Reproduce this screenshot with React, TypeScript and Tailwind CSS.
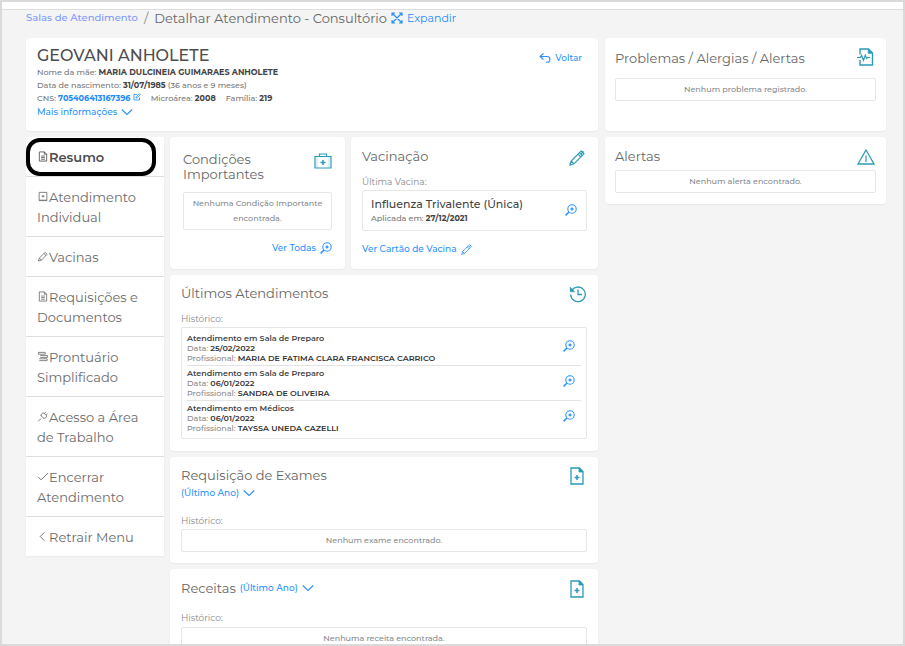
import React from 'react';

interface IconProps {
  className?: string;
}

interface SvgProps extends IconProps {
  children: React.ReactNode;
  viewBox?: string;
  stroke?: number;
}

function Svg({ children, className = '', viewBox = '0 0 18 18', stroke = 1.4 }: SvgProps) {
  return (
    <svg
      viewBox={viewBox}
      fill="none"
      stroke="currentColor"
      strokeWidth={stroke}
      className={`shrink-0 ${className}`}
      aria-hidden="true"
    >
      {children}
    </svg>
  );
}

const ExpandIcon = ({ className }: IconProps) => (
  <Svg className={className} viewBox="0 0 12 12" stroke={1.1}>
    <path d="M1.5 1.5l9 9M10.5 1.5l-9 9M1 4V1h3M8 1h3v3M11 8v3H8M4 11H1V8" />
  </Svg>
);

const BackIcon = ({ className }: IconProps) => (
  <Svg className={className} viewBox="0 0 12 12" stroke={1.1}>
    <path d="M4.5 1.5L1 4.5l3.5 3M1 4.5h7a2.8 2.8 0 0 1 0 5.8H6.8" />
  </Svg>
);

const EditIcon = ({ className }: IconProps) => (
  <Svg className={className} viewBox="0 0 8 8" stroke={0.8}>
    <path d="M4 1.5H1v5.5h5.5V4.5M3 5l.3-1.3L6.4.7l1 1-3 3z" />
  </Svg>
);

const ChevronDownIcon = ({ className }: IconProps) => (
  <Svg className={className} viewBox="0 0 12 8" stroke={1.2}>
    <path d="M.8 1.500L6 6.500l5.200-5" />
  </Svg>
);

const PulseFileIcon = ({ className }: IconProps) => (
  <Svg className={className}>
    <path d="M4 6.500V1h8.500L16.500 5v12H4v-5" />
    <path d="M12.300 1.500l3.800 3.800h-3.800z" fill="currentColor" strokeWidth={0.8} />
    <path d="M1 9.500h3.500l1-2.300 2 5 1.800-5 1.300 3.300.9-1H14" strokeWidth={1.2} />
  </Svg>
);

const AlertIcon = ({ className }: IconProps) => (
  <Svg className={className} stroke={1.3}>
    <path d="M9 2l8 14H1z" />
    <path d="M9 7.500v6.500" strokeWidth={1.2} />
  </Svg>
);

const KitIcon = ({ className }: IconProps) => (
  <Svg className={className} stroke={1.2}>
    <path d="M1 4.500h16v11.500H1zM5.500 4.500V2h7v2.500" />
    <path d="M9 8v5M6.500 10.500h5" strokeWidth={1.5} />
    <path d="M3 5v11M15 5v11" strokeWidth={0.5} opacity={0.6} />
  </Svg>
);

const SyringeIcon = ({ className }: IconProps) => (
  <Svg className={className} viewBox="0 0 16 16" stroke={1.2}>
    <path d="M1 15l1.200-4L10.500 2.700l2.800 2.800L5 13.800zM2.200 11L5 13.800M9 4.200L11.800 7M11 2l1.500-1 2.500 2.500-1 1.500" />
    <path d="M12 4l2.500-2.500" />
  </Svg>
);

const HistoryIcon = ({ className }: IconProps) => (
  <Svg className={className} stroke={1.3}>
    <path d="M2.500 6A7.300 7.300 0 1 1 1.700 9.500" />
    <path d="M1.200 2.200v4.600h4.600z" fill="currentColor" strokeWidth={0.6} />
    <path d="M9 4.500V9.500h4" />
  </Svg>
);

const FilePlusIcon = ({ className }: IconProps) => (
  <Svg className={className} viewBox="0 0 14 18" stroke={1.3}>
    <path d="M1 1h8.500L13 4.500V17H1z" />
    <path d="M9 1v4h4z" fill="currentColor" strokeWidth={0.8} />
    <path d="M7 8v5M4.500 10.500h5" strokeWidth={1.5} />
  </Svg>
);

const ZoomIcon = ({ className }: IconProps) => (
  <Svg className={className} viewBox="0 0 12 12" stroke={1.1}>
    <circle cx="7" cy="5" r="4.200" />
    <path d="M4 8L.6 11.400" strokeWidth={1.5} />
    <path d="M7 3.500v3M5.500 5h3" strokeWidth={1.4} />
  </Svg>
);

const FileIcon = ({ className }: IconProps) => (
  <Svg className={className} viewBox="0 0 10 12" stroke={0.9}>
    <path d="M1 1h5.500L9 3.500V11H1zM6.500 1v2.500H9M3 5.500h4M3 7.200h4M3 9h4" />
  </Svg>
);

const PageDotIcon = ({ className }: IconProps) => (
  <Svg className={className} viewBox="0 0 10 12" stroke={0.9}>
    <path d="M.8 1.500h8.400v9H.8zM.8 10h8.400" />
    <path d="M3.500 5.700h3M5 4.300v2.900" />
  </Svg>
);

const PenIcon = ({ className }: IconProps) => (
  <Svg className={className} viewBox="0 0 12 12" stroke={0.9}>
    <path d="M1 11l1-3.300L8.300 1.500l2.200 2.200L4.300 10zM7 2.800L9.200 5M2 7.700L4.300 10" />
  </Svg>
);

const LinesIcon = ({ className }: IconProps) => (
  <Svg className={className} viewBox="0 0 12 12" stroke={0.9}>
    <path d="M1 1.500h7.500v2H1M3 5h8v2H3M2 8.500h8.500v2H2M1 1.500v2" />
  </Svg>
);

const PlugIcon = ({ className }: IconProps) => (
  <Svg className={className} viewBox="0 0 12 12" stroke={0.9}>
    <path d="M.8 11.200l3-3M3.500 4.700L7.300 8.500M4.200 5.400c-.8-2 1-3.600 2.800-3.200l2.800 2.800c.4 1.800-1.200 3.600-3.200 2.800M7.500 2.700L9.300.9M9.300 4.500l1.800-1.800" />
  </Svg>
);

const CheckIcon = ({ className }: IconProps) => (
  <Svg className={className} viewBox="0 0 12 12" stroke={1}>
    <path d="M.8 6.500L4 9.700 11.500 2.200" />
  </Svg>
);

const ChevronLeftIcon = ({ className }: IconProps) => (
  <Svg className={className} viewBox="0 0 12 12" stroke={1}>
    <path d="M7.500 1.500L3 6l4.500 4.500" />
  </Svg>
);

const menuItems = [
  { id: 'resumo', label: 'Resumo', icon: FileIcon },
  { id: 'atendimento', label: 'Atendimento Individual', icon: PageDotIcon },
  { id: 'vacinas', label: 'Vacinas', icon: PenIcon },
  { id: 'requisicoes', label: 'Requisições e Documentos', icon: FileIcon },
  { id: 'prontuario', label: 'Prontuário Simplificado', icon: LinesIcon },
  { id: 'acesso', label: 'Acesso a Área de Trabalho', icon: PlugIcon },
  { id: 'encerrar', label: 'Encerrar Atendimento', icon: CheckIcon },
  { id: 'retrair', label: 'Retrair Menu', icon: ChevronLeftIcon },
];

const visits = [
  { title: 'Atendimento em Sala de Preparo', date: '25/02/2022', professional: 'MARIA DE FATIMA CLARA FRANCISCA CARRICO' },
  { title: 'Atendimento em Sala de Preparo', date: '06/01/2022', professional: 'SANDRA DE OLIVEIRA' },
  { title: 'Atendimento em Médicos', date: '06/01/2022', professional: 'TAYSSA UNEDA CAZELLI' },
];

function Card({ children, className = '' }: { children: React.ReactNode; className?: string }) {
  return <section className={`bg-white rounded-sm shadow-xs ${className}`}>{children}</section>;
}

function EmptyBox({ children }: { children: React.ReactNode }) {
  return (
    <p className="border border-[#e6e6e6] rounded-xs px-1 py-[3px] text-center text-[8px] leading-[15px] font-medium text-[#858a90]">
      {children}
    </p>
  );
}

function Title({ children }: { children: React.ReactNode }) {
  return <h2 className="text-[13px] leading-5 text-[#666]">{children}</h2>;
}

function Label({ children }: { children: React.ReactNode }) {
  return <p className="text-[9px] leading-4 text-[#888]">{children}</p>;
}

function YearFilter() {
  return (
    <button className="flex items-center gap-1 text-[9px] leading-4 font-medium text-[#2b93ff]">
      (Último Ano) <ChevronDownIcon className="w-3 h-2" />
    </button>
  );
}

function Menu({ active }: { active: string }) {
  return (
    <nav className="w-[138px] shrink-0 self-start bg-white shadow-xs">
      {menuItems.map((item) => (
        <a
          key={item.id}
          href={`#${item.id}`}
          className={`relative block pl-[11px] pr-3 pt-[10px] pb-[9px] border-b border-[#dedede] last:border-b-0 text-[13px] leading-5 ${
            active === item.id ? 'font-semibold text-[#4d4d4d]' : 'text-[#6b6b6b]'
          }`}
        >
          <item.icon className="inline-block w-3 h-[11px] align-baseline" />
          {item.label}
          {active === item.id && (
            <span className="absolute left-0 right-2 top-px bottom-0 border-4 border-black rounded-[14px]" />
          )}
        </a>
      ))}
    </nav>
  );
}

function PatientCard() {
  return (
    <Card className="flex justify-between pl-[11px] pr-4 pt-2 pb-3">
      <div className="text-[8px] leading-[13px] font-medium text-[#777]">
        <h1 className="text-[16px] leading-5 font-medium text-[#4d4d4d]">GEOVANI ANHOLETE</h1>
        <p>
          Nome da mãe: <b className="font-bold text-[#444]">MARIA DULCINEIA GUIMARAES ANHOLETE</b>
        </p>
        <p>
          Data de nascimento: <b className="font-bold text-[#444]">31/07/1985</b> (36 anos e 9 meses)
        </p>
        <p className="flex">
          <span>
            CNS:{' '}
            <a href="#cns" className="font-bold text-[#1e8cff]">
              705406413167396 <EditIcon className="inline-block w-2 h-2 align-baseline" />
            </a>
          </span>
          <span className="ml-[10px]">
            Microárea: <b className="font-bold text-[#444]">2008</b>
          </span>
          <span className="ml-[10px]">
            Família: <b className="font-bold text-[#444]">219</b>
          </span>
        </p>
        <button className="flex items-center gap-1 text-[9px] leading-[14px] text-[#2b93ff]">
          Mais informações <ChevronDownIcon className="w-3 h-2" />
        </button>
      </div>
      <a href="#voltar" className="self-start flex items-center gap-1 mt-1 text-[9px] leading-4 font-medium text-[#2b93ff]">
        <BackIcon className="w-3 h-3" /> Voltar
      </a>
    </Card>
  );
}

function ConditionsCard() {
  return (
    <Card className="w-[175px] shrink-0 px-[13px] pt-[15px] pb-3">
      <div className="flex justify-between items-start mb-[10px]">
        <h2 className="w-24 text-[13px] leading-[15px] text-[#666]">Condições Importantes</h2>
        <KitIcon className="w-[18px] h-[18px] text-[#2b9bb8]" />
      </div>
      <EmptyBox>Nenhuma Condição Importante encontrada.</EmptyBox>
      <div className="flex justify-end mt-[10px]">
        <a href="#condicoes" className="flex items-center gap-1 text-[9px] leading-4 font-medium text-[#2b93ff]">
          Ver Todas <ZoomIcon className="w-3 h-3" />
        </a>
      </div>
    </Card>
  );
}

function VaccineCard() {
  return (
    <Card className="flex-1 min-w-0 px-[11px] pt-[9px] pb-3">
      <div className="flex justify-between">
        <Title>Vacinação</Title>
        <SyringeIcon className="w-4 h-4 mt-1 mr-0.5 text-[#2b9bb8]" />
      </div>
      <div className="mt-2">
        <Label>Última Vacina:</Label>
      </div>
      <div className="flex items-center justify-between border border-[#e6e6e6] rounded-xs pl-2 pr-[9px] pt-[5px] pb-[6px]">
        <div>
          <p className="text-[11px] leading-4 font-medium text-[#444]">Influenza Trivalente (Única)</p>
          <p className="text-[8px] leading-3 font-medium text-[#777]">
            Aplicada em: <b className="font-bold text-[#444]">27/12/2021</b>
          </p>
        </div>
        <button aria-label="Ver vacina" className="text-[#2b93ff]">
          <ZoomIcon className="w-3 h-3" />
        </button>
      </div>
      <a href="#cartao" className="flex items-center gap-1 mt-[10px] text-[9px] leading-4 font-medium text-[#2b93ff]">
        Ver Cartão de Vacina <SyringeIcon className="w-[11px] h-[11px]" />
      </a>
    </Card>
  );
}

function VisitsCard() {
  return (
    <Card className="px-[11px] pt-2 pb-3">
      <div className="flex justify-between">
        <Title>Últimos Atendimentos</Title>
        <HistoryIcon className="w-[18px] h-[18px] mt-0.5 text-[#2b9bb8]" />
      </div>
      <div className="mt-2">
        <Label>Histórico:</Label>
      </div>
      <ul className="border border-[#e6e6e6] rounded-xs px-[5px] py-[3px]">
        {visits.map((visit) => (
          <li
            key={visit.title + visit.professional}
            className="flex items-center justify-between pr-1.5 py-0.5 border-b border-[#e3e3e3] last:border-b-0"
          >
            <div className="text-[8px] leading-[10px] font-medium text-[#888]">
              <p className="font-semibold text-[#444]">{visit.title}</p>
              <p>
                Data: <span className="font-semibold text-[#333]">{visit.date}</span>
              </p>
              <p>
                Profissional: <span className="font-semibold text-[#333]">{visit.professional}</span>
              </p>
            </div>
            <button aria-label="Ver atendimento" className="pb-1 text-[#2b93ff]">
              <ZoomIcon className="w-3 h-3" />
            </button>
          </li>
        ))}
      </ul>
    </Card>
  );
}

export default function App() {
  return (
    <div className="h-screen overflow-hidden border-2 border-[#dadada] bg-[#f4f4f4] font-['Montserrat','Inter',sans-serif]">
      <div className="h-2 bg-white border-b border-[#dedede]" />

      <div className="pl-6 pr-[17px]">
        <header className="flex items-center h-4 mb-3 whitespace-nowrap">
          <a href="#salas" className="text-[10px] leading-4 font-medium text-[#8099ff]">Salas de Atendimento</a>
          <span className="mx-[6px] text-[13px] leading-4 text-[#888]">/</span>
          <span className="text-[13px] leading-4 text-[#666]">Detalhar Atendimento - Consultório</span>
          <button className="flex items-center gap-1 ml-1 text-[11px] leading-4 text-[#1e8cff]">
            <ExpandIcon className="w-3 h-3" /> Expandir
          </button>
        </header>

        <div className="grid grid-cols-[572fr_281fr] gap-[7px] items-start">
          <main className="flex flex-col gap-[6px] min-w-0">
            <PatientCard />
            <div className="flex gap-[6px]">
              <Menu active="resumo" />
              <div className="flex-1 min-w-0 flex flex-col gap-[6px]">
                <div className="flex gap-[6px]">
                  <ConditionsCard />
                  <VaccineCard />
                </div>
                <VisitsCard />
                <Card className="px-[11px] pt-2 pb-[11px]">
                  <div className="flex justify-between">
                    <Title>Requisição de Exames</Title>
                    <FilePlusIcon className="w-[14px] h-[18px] mt-0.5 mr-[3px] text-[#2b9bb8]" />
                  </div>
                  <YearFilter />
                  <div className="mt-3">
                    <Label>Histórico:</Label>
                  </div>
                  <EmptyBox>Nenhum exame encontrado.</EmptyBox>
                </Card>
                <Card className="px-[11px] pt-[9px] pb-[11px]">
                  <div className="flex justify-between">
                    <div className="flex items-center gap-1">
                      <Title>Receitas</Title>
                      <YearFilter />
                    </div>
                    <FilePlusIcon className="w-[14px] h-[18px] mt-0.5 mr-[3px] text-[#2b9bb8]" />
                  </div>
                  <div className="mt-3 mb-px">
                    <Label>Histórico:</Label>
                  </div>
                  <EmptyBox>Nenhuma receita encontrada.</EmptyBox>
                </Card>
              </div>
            </div>
          </main>

          <aside className="flex flex-col gap-[6px] min-w-0">
            <Card className="px-[10px] pt-[10px] pb-[30px]">
              <div className="flex justify-between mb-[10px]">
                <Title>Problemas / Alergias / Alertas</Title>
                <PulseFileIcon className="w-[18px] h-[18px] mr-0.5 text-[#2b9bb8]" />
              </div>
              <EmptyBox>Nenhum problema registrado.</EmptyBox>
            </Card>
            <Card className="px-[10px] pt-[9px] pb-[11px]">
              <div className="flex justify-between mb-1">
                <Title>Alertas</Title>
                <AlertIcon className="w-[18px] h-[18px] mt-0.5 mr-px text-[#2b9bb8]" />
              </div>
              <EmptyBox>Nenhum alerta encontrado.</EmptyBox>
            </Card>
          </aside>
        </div>
      </div>
    </div>
  );
}
